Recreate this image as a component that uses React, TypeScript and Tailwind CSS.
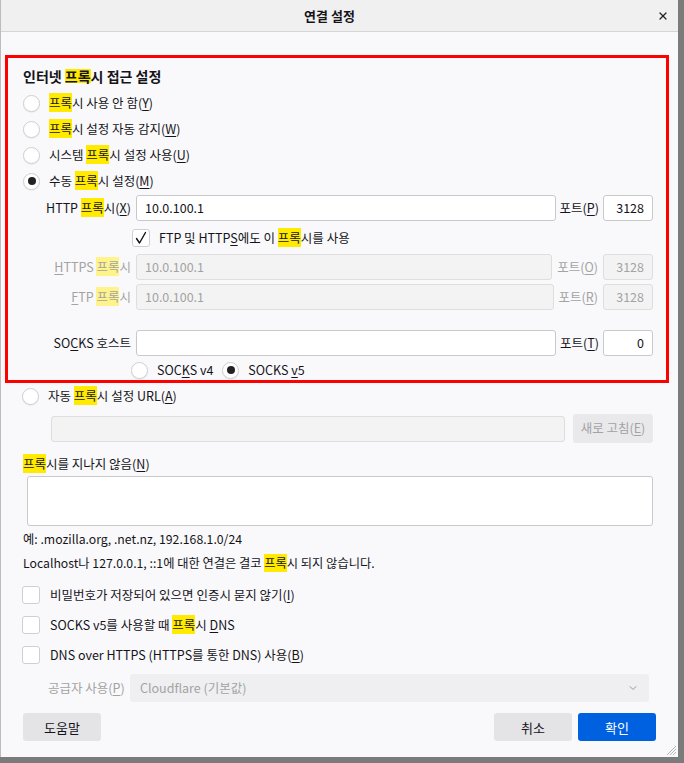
import React from "react";
import { X, ChevronDown } from "lucide-react";

const Hl = ({ dim = false }: { dim?: boolean }) => (
  <span className={dim ? "bg-[#fff38c]" : "bg-[#ffea00]"}>프록</span>
);

const U = ({ children }: { children: React.ReactNode }) => (
  <span className="underline underline-offset-2 decoration-1">{children}</span>
);

const Radio = ({ checked = false }: { checked?: boolean }) => (
  <span className="w-[17px] h-[17px] shrink-0 rounded-full border border-[#cfcfd3] bg-white shadow-[0_1px_1px_rgba(0,0,0,0.06)] flex items-center justify-center">
    {checked && <span className="w-[8px] h-[8px] rounded-full bg-[#222]" />}
  </span>
);

const Check = ({ checked = false }: { checked?: boolean }) => (
  <span className="w-[18px] h-[18px] shrink-0 rounded-[3px] border border-[#cfcfd3] bg-white flex items-center justify-center">
    {checked && (
      <svg width="14" height="14" viewBox="0 0 14 14" fill="none">
        <path d="M2.5 7.5 L5.5 12 L11.5 1.5" stroke="#111" strokeWidth="1.4" strokeLinecap="round" strokeLinejoin="round" />
      </svg>
    )}
  </span>
);

const Field = ({ value = "", disabled = false, right = false, className = "" }: { value?: string; disabled?: boolean; right?: boolean; className?: string }) => (
  <div
    className={`h-[26px] rounded-[3px] border flex items-center px-[8px] ${right ? "justify-end" : ""} ${
      disabled ? "bg-[#f3f3f3] border-[#dedede] text-[#a3a3a3]" : "bg-white border-[#c9c9cc] text-[#15141a]"
    } ${className}`}
  >
    {value}
  </div>
);

const App: React.FC = () => {
  return (
    <div className="w-[684px] h-[763px] bg-[#7b7b7b] overflow-hidden font-['Noto_Sans_CJK_KR',sans-serif] text-[12.5px] text-[#15141a] leading-none">
      <div className="relative w-[678px] h-[757px] bg-[#f9f9fb] border-l border-[#bcbcbc] flex flex-col">
        {/* Title bar */}
        <div className="relative h-[32px] shrink-0 bg-[#f0f0f0] border-b border-[#d5d5d8] flex items-center justify-center pr-[20px]">
          <span className="font-bold text-[13px]">연결 설정</span>
          <X className="absolute right-[9px] top-[10px]" size={12} strokeWidth={2.4} color="#222" />
        </div>

        <div className="flex-1 pl-[4px] pr-[9px] pt-[23px]">
          {/* Manual proxy group */}
          <div className="border-[3px] border-[#ff0000] pl-[15px] pr-[13px] pt-[8px]">
            <div className="h-[20px] flex items-center font-bold text-[14px]">
              인터넷&nbsp;<Hl />시 접근 설정
            </div>
            <div className="mt-[4px]">
              <div className="h-[26px] flex items-center gap-[9px]">
                <Radio />
                <span><Hl />시 사용 안 함(<U>Y</U>)</span>
              </div>
              <div className="h-[26px] flex items-center gap-[9px]">
                <Radio />
                <span><Hl />시 설정 자동 감지(<U>W</U>)</span>
              </div>
              <div className="h-[26px] flex items-center gap-[9px]">
                <Radio />
                <span>시스템 <Hl />시 설정 사용(<U>U</U>)</span>
              </div>
              <div className="h-[26px] flex items-center gap-[9px]">
                <Radio checked />
                <span>수동 <Hl />시 설정(<U>M</U>)</span>
              </div>
            </div>

            <div className="mt-[1px] h-[26px] flex items-center">
              <span className="w-[113px] text-right pr-[5px] shrink-0">HTTP <Hl />시(<U>X</U>)</span>
              <Field value="10.0.100.1" className="flex-1" />
              <span className="px-[4px]">포트(<U>P</U>)</span>
              <Field value="3128" right className="w-[50px] px-[6px]" />
            </div>

            <div className="mt-[4px] h-[26px] flex items-center gap-[9px] pl-[109px]">
              <Check checked />
              <span>FTP 및 HTTP<U>S</U>에도 이 <Hl />시를 사용</span>
            </div>

            <div className="mt-[3px] h-[26px] flex items-center text-[#a3a3a3]">
              <span className="w-[113px] text-right pr-[5px] shrink-0"><U>H</U>TTPS <Hl dim />시</span>
              <Field value="10.0.100.1" disabled className="flex-1" />
              <span className="px-[5px]">포트(<U>O</U>)</span>
              <Field value="3128" disabled right className="w-[50px] px-[6px]" />
            </div>

            <div className="mt-[4px] h-[26px] flex items-center text-[#a3a3a3]">
              <span className="w-[113px] text-right pr-[5px] shrink-0"><U>F</U>TP <Hl dim />시</span>
              <Field disabled value="10.0.100.1" className="flex-1" />
              <span className="px-[5px]">포트(<U>R</U>)</span>
              <Field value="3128" disabled right className="w-[50px] px-[6px]" />
            </div>

            <div className="mt-[20px] h-[26px] flex items-center">
              <span className="w-[113px] text-right pr-[5px] shrink-0">SO<U>C</U>KS 호스트</span>
              <Field className="flex-1" />
              <span className="px-[4px]">포트(<U>T</U>)</span>
              <Field value="0" right className="w-[50px] px-[6px]" />
            </div>

            <div className="mt-[4px] h-[20px] flex items-center pl-[108px]">
              <Radio />
              <span className="ml-[9px]">SOC<U>K</U>S v4</span>
              <span className="ml-[9px]"><Radio checked /></span>
              <span className="ml-[9px]">SOCKS <U>v</U>5</span>
            </div>
          </div>

          {/* Automatic proxy config */}
          <div className="pl-[17px] pr-[16px]">
            <div className="h-[26px] flex items-center gap-[9px]">
              <Radio />
              <span>자동 <Hl />시 설정 URL(<U>A</U>)</span>
            </div>
            <div className="mt-[5px] flex items-center pl-[29px] gap-[8px]">
              <Field disabled className="flex-1" />
              <div className="h-[29px] w-[80px] rounded-[3px] bg-[#e9e9ec] text-[#a3a3a3] flex items-center justify-center">
                새로 고침(<U>E</U>)
              </div>
            </div>

            <div className="mt-[11px] h-[20px] flex items-center pl-[1px]">
              <span><Hl />시를 지나지 않음(<U>N</U>)</span>
            </div>
            <div className="mt-[2px] ml-[5px] h-[50px] rounded-[3px] border border-[#c9c9cc] bg-white" />

            <div className="mt-[3px] h-[20px] flex items-center pl-[1px] text-[12.25px]">
              예: .mozilla.org, .net.nz, 192.168.1.0/24
            </div>
            <div className="mt-[4px] h-[20px] flex items-center pl-[1px] text-[12.25px]">
              <span>Localhost나 127.0.0.1, ::1에 대한 연결은 결코 <Hl />시 되지 않습니다.</span>
            </div>

            <div className="mt-[7px]">
              <div className="h-[30px] flex items-center gap-[10px]">
                <Check />
                <span>비밀번호가 저장되어 있으면 인증시 묻지 않기(<U>I</U>)</span>
              </div>
              <div className="h-[30px] flex items-center gap-[10px]">
                <Check />
                <span>SOCKS v5를 사용할 때 <Hl />시 <U>D</U>NS</span>
              </div>
              <div className="h-[30px] flex items-center gap-[10px]">
                <Check />
                <span>DNS over HTTPS (HTTPS를 통한 DNS) 사용(<U>B</U>)</span>
              </div>
            </div>

            <div className="mt-[4px] h-[28px] flex items-center text-[#a3a3a3] pr-[4px]">
              <span className="w-[108px] pl-[26px] shrink-0">공급자 사용(<U>P</U>)</span>
              <div className="flex-1 h-[28px] rounded-[3px] bg-[#efeff1] flex items-center justify-between pl-[10px] pr-[10px]">
                <span>Cloudflare (기본값)</span>
                <ChevronDown size={12} strokeWidth={2} color="#9a9a9a" />
              </div>
            </div>
          </div>

          {/* Footer buttons */}
          <div className="mt-[11px] pl-[18px] pr-[13px] flex items-center justify-between">
            <div className="h-[28px] w-[78px] rounded-[3px] bg-[#e4e4e7] flex items-center justify-center text-[13px]">도움말</div>
            <div className="flex gap-[6px]">
              <div className="h-[28px] w-[78px] rounded-[3px] bg-[#e4e4e7] flex items-center justify-center text-[13px]">취소</div>
              <div className="h-[28px] w-[78px] rounded-[3px] bg-[#0061e0] text-white flex items-center justify-center text-[13px]">확인</div>
            </div>
          </div>
        </div>

        {/* resize grip */}
        <svg className="absolute right-[1px] bottom-[1px]" width="12" height="12" viewBox="0 0 12 12">
          <path d="M11 2 L2 11 M11 5 L5 11 M11 8 L8 11" stroke="#b5b5b5" strokeWidth="1" />
        </svg>
      </div>
    </div>
  );
};

export default App;
